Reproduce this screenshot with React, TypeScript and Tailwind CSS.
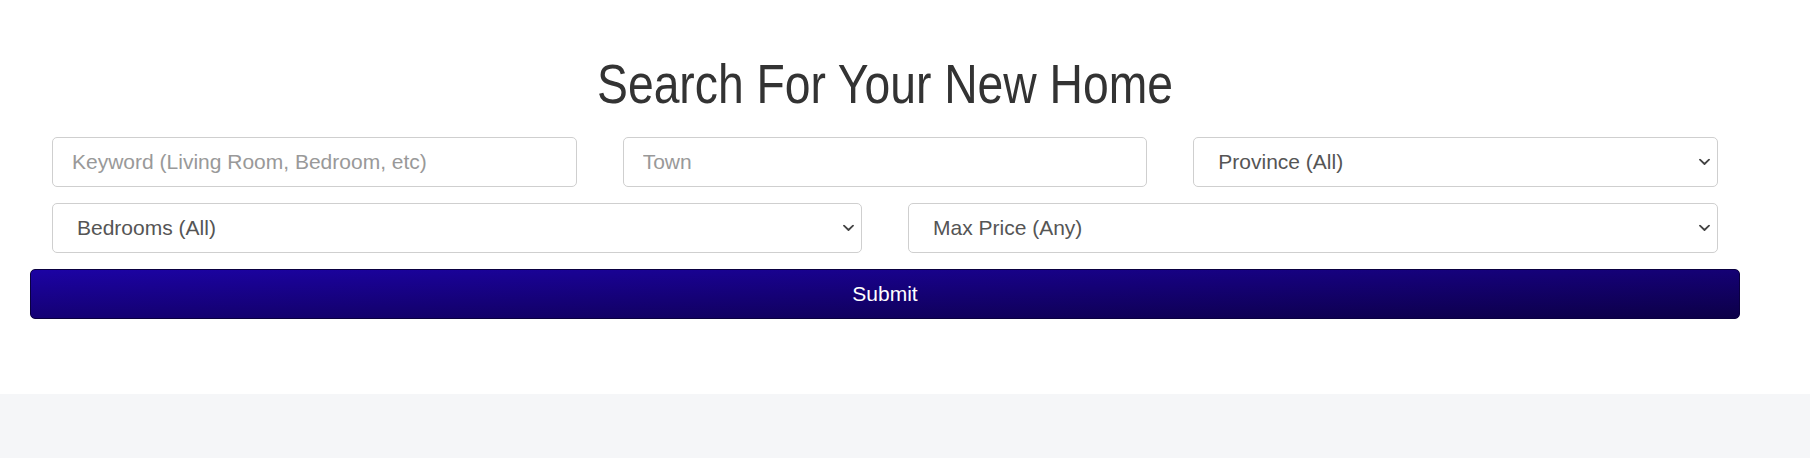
import React from "react";

function Chevron() {
  return (
    <svg
      className="pointer-events-none absolute right-[8px] top-1/2 -translate-y-1/2"
      width="11"
      height="7"
      viewBox="0 0 11 7"
      fill="none"
    >
      <path d="M1 1.2L5.5 5.5L10 1.2" stroke="#444" strokeWidth="1.8" strokeLinecap="round" strokeLinejoin="round" />
    </svg>
  );
}

function Select({ label }: { label: string }) {
  return (
    <div className="relative">
      <select
        defaultValue=""
        className="block h-[50px] w-full appearance-none rounded-[5px] border border-[#cfcfcf] bg-white pl-[24px] pr-[30px] text-[21px] text-[#555] outline-none"
      >
        <option value="">{label}</option>
      </select>
      <Chevron />
    </div>
  );
}

function TextInput({ placeholder }: { placeholder: string }) {
  return (
    <input
      type="text"
      placeholder={placeholder}
      className="block h-[50px] w-full rounded-[5px] border border-[#cfcfcf] bg-white px-[19px] text-[21px] text-[#555] outline-none placeholder:text-[#999]"
    />
  );
}

export default function App() {
  return (
    <div className="min-h-[458px] bg-[#f5f6f8] font-['Liberation_Sans',Arial,sans-serif]">
      <div className="h-[394px] bg-white">
        <div className="ml-[30px] w-[1710px] pt-[56px]">
          <h1 className="scale-x-[0.826] text-center text-[56px] font-normal leading-[56px] text-[#333]">
            Search For Your New Home
          </h1>
          <div className="mt-[25px] px-[22px]">
            <div className="grid grid-cols-3 gap-x-[46px]">
              <TextInput placeholder="Keyword (Living Room, Bedroom, etc)" />
              <TextInput placeholder="Town" />
              <Select label="Province (All)" />
            </div>
            <div className="mt-[16px] grid grid-cols-2 gap-x-[46px]">
              <Select label="Bedrooms (All)" />
              <Select label="Max Price (Any)" />
            </div>
          </div>
          <button
            type="button"
            className="mt-[16px] block h-[50px] w-full rounded-[5px] border border-[#0a0040] bg-gradient-to-br from-[#1c03a4] to-[#0c0048] text-[21px] text-white"
          >
            Submit
          </button>
        </div>
      </div>
    </div>
  );
}
